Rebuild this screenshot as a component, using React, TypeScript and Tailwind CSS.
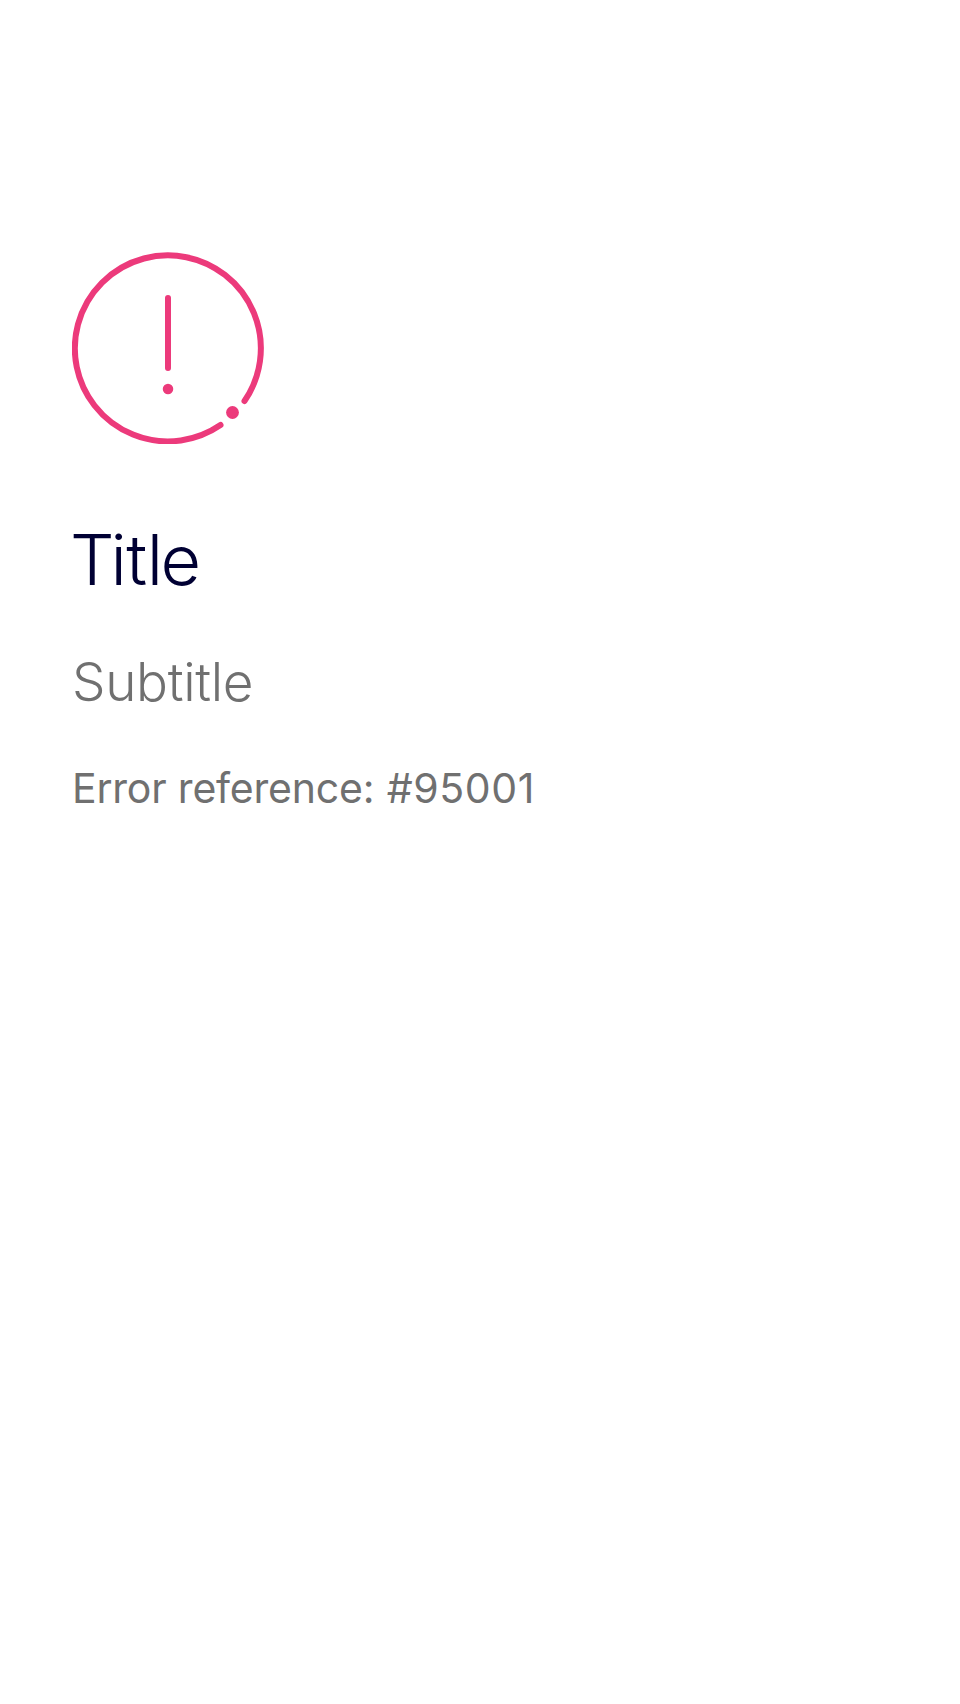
export default function App() {
  return (
    <main className="flex min-h-[1704px] w-full flex-col items-start bg-white px-[72px] pt-[252px] font-['Inter','Liberation_Sans',sans-serif]">
      <svg className="size-[192px]" viewBox="0 0 192 192" fill="none" stroke="#ec3a7b" strokeWidth="6" strokeLinecap="round" aria-hidden="true">
        <path d="M172.5 149A93 93 0 1 0 148.5 173" />
        <path d="M96 46V116" />
        <circle cx="96" cy="137" r="5.25" fill="#ec3a7b" stroke="none" />
        <circle cx="160.5" cy="160.5" r="6.4" fill="#ec3a7b" stroke="none" />
      </svg>
      <h1 className="mt-[72px] -ml-[2px] text-[70px] leading-[88px] font-light tracking-[-0.5px] text-[#000033]"><span className="tracking-[-4px]">T</span>it<span className="tracking-[-2.5px]">le</span></h1>
      <h2 className="mt-[46px] text-[53px] leading-[64px] font-light tracking-[-0.3px] text-[#707070]">Subtitle</h2>
      <p className="mt-[49px] text-[41px] leading-[50px] tracking-[-0.2px] text-[#707070]">Error reference: <span className="ml-px tracking-[0.6px]">#95001</span></p>
    </main>
  );
}
